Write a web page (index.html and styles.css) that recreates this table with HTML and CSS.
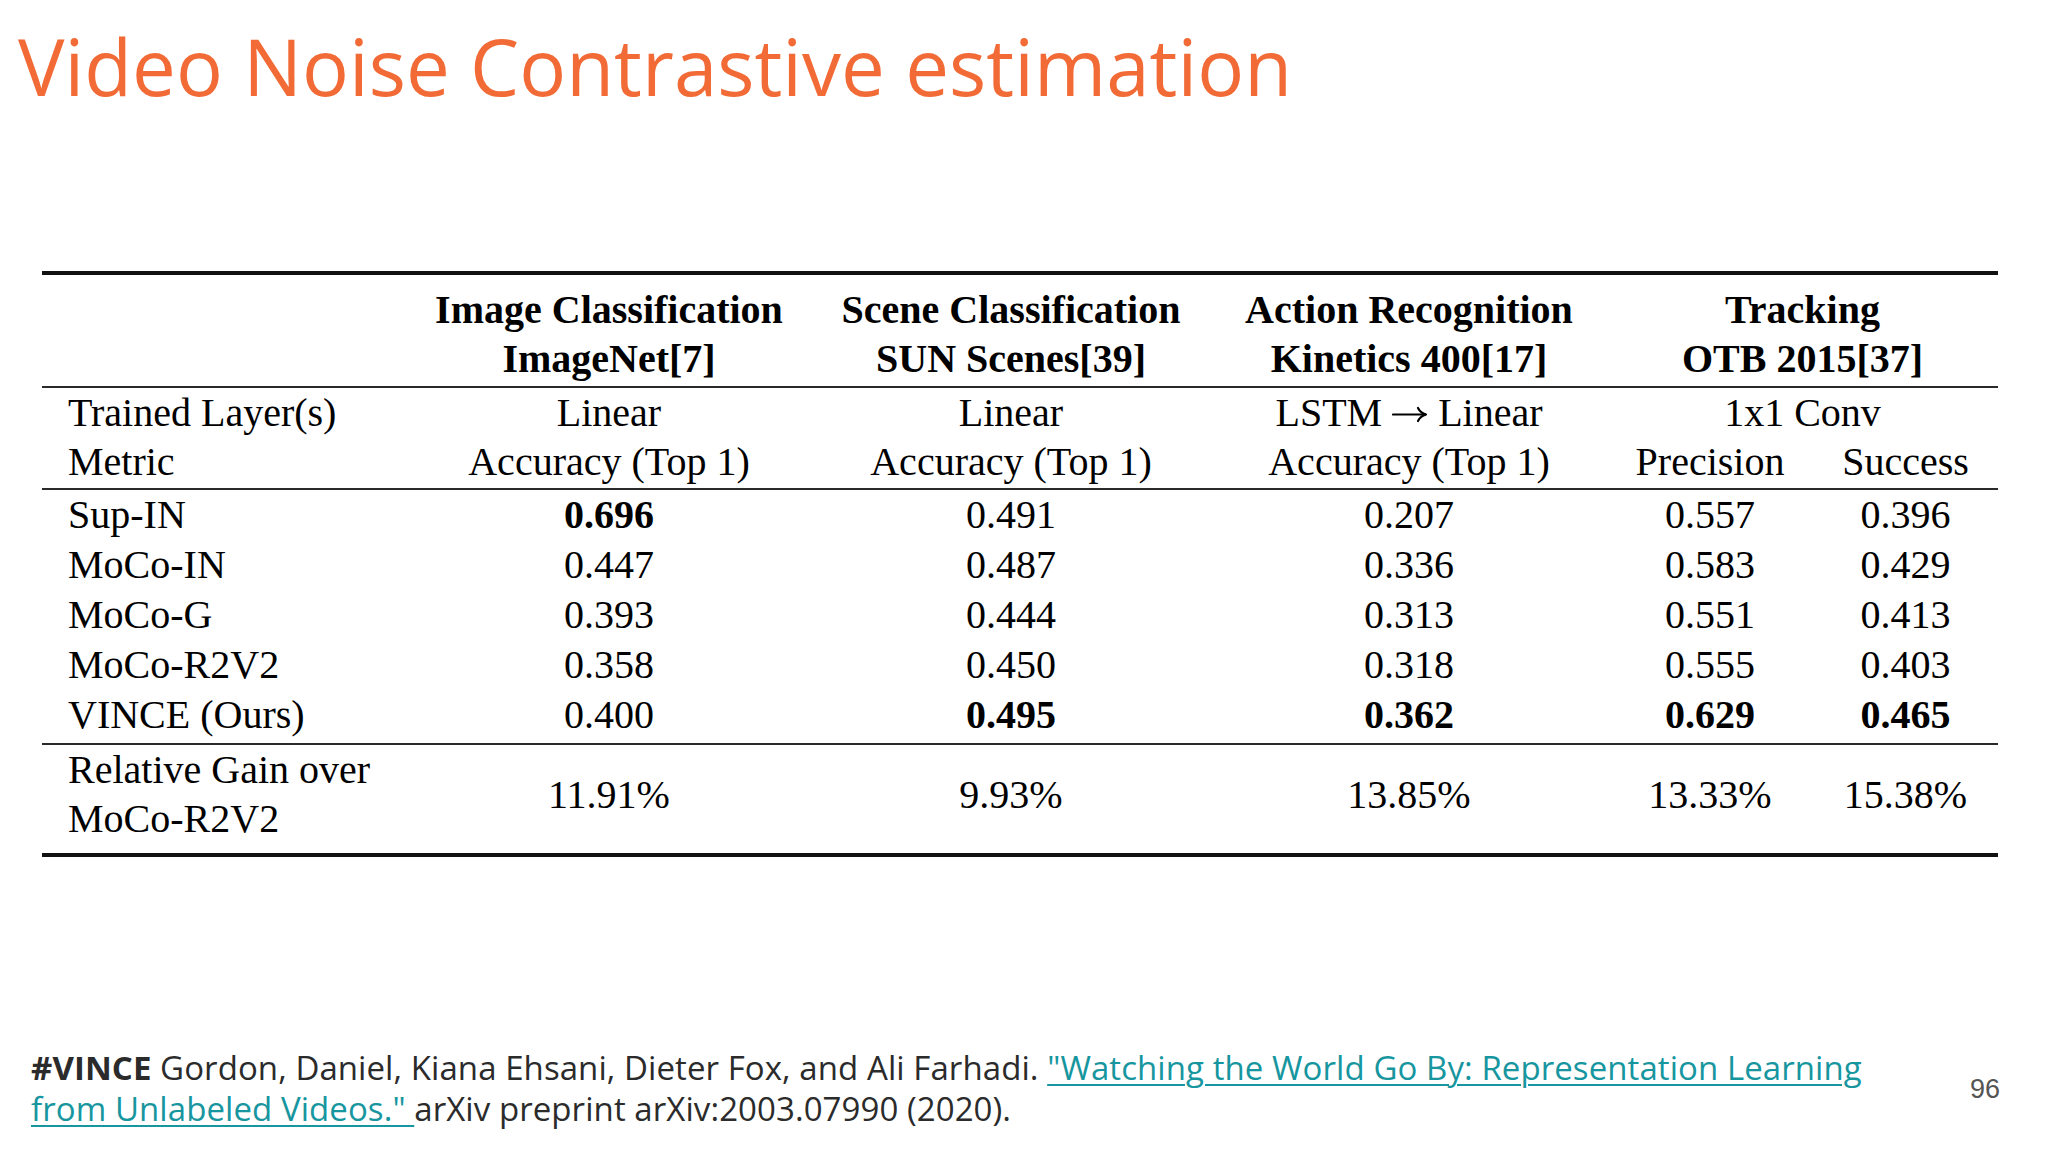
FILE: index.html
```html
<!DOCTYPE html>
<html lang="en">
<head>
<meta charset="utf-8">
<title>Video Noise Contrastive estimation</title>
<link rel="stylesheet" href="styles.css">
</head>
<body>
<div class="slide">
  <h1 class="title">Video Noise Contrastive estimation</h1>

  <table class="results">
    <colgroup>
      <col class="c-label">
      <col class="c-a">
      <col class="c-b">
      <col class="c-c">
      <col class="c-d">
      <col class="c-e">
    </colgroup>
    <thead>
      <tr class="hd1">
        <th></th>
        <th>Image Classification</th>
        <th>Scene Classification</th>
        <th>Action Recognition</th>
        <th colspan="2">Tracking</th>
      </tr>
      <tr class="hd2">
        <th></th>
        <th>ImageNet[7]</th>
        <th>SUN Scenes[39]</th>
        <th>Kinetics 400[17]</th>
        <th colspan="2">OTB 2015[37]</th>
      </tr>
    </thead>
    <tbody class="setup">
      <tr class="first">
        <td class="label">Trained Layer(s)</td>
        <td>Linear</td>
        <td>Linear</td>
        <td>LSTM <svg class="arrow" viewBox="0 0 36 20" width="36" height="20" aria-label="→"><path d="M1 10.5 H33" /><path d="M26 4 Q28.5 9 34 10.5 Q28.5 12 26 17" /></svg> Linear</td>
        <td colspan="2">1x1 Conv</td>
      </tr>
      <tr class="last">
        <td class="label">Metric</td>
        <td>Accuracy (Top 1)</td>
        <td>Accuracy (Top 1)</td>
        <td>Accuracy (Top 1)</td>
        <td>Precision</td>
        <td>Success</td>
      </tr>
    </tbody>
    <tbody class="data">
      <tr class="first">
        <td class="label">Sup-IN</td>
        <td class="best">0.696</td>
        <td>0.491</td>
        <td>0.207</td>
        <td>0.557</td>
        <td>0.396</td>
      </tr>
      <tr>
        <td class="label">MoCo-IN</td>
        <td>0.447</td>
        <td>0.487</td>
        <td>0.336</td>
        <td>0.583</td>
        <td>0.429</td>
      </tr>
      <tr>
        <td class="label">MoCo-G</td>
        <td>0.393</td>
        <td>0.444</td>
        <td>0.313</td>
        <td>0.551</td>
        <td>0.413</td>
      </tr>
      <tr>
        <td class="label">MoCo-R2V2</td>
        <td>0.358</td>
        <td>0.450</td>
        <td>0.318</td>
        <td>0.555</td>
        <td>0.403</td>
      </tr>
      <tr class="last">
        <td class="label">VINCE (Ours)</td>
        <td>0.400</td>
        <td class="best">0.495</td>
        <td class="best">0.362</td>
        <td class="best">0.629</td>
        <td class="best">0.465</td>
      </tr>
    </tbody>
    <tbody class="gain">
      <tr class="first last">
        <td class="label">Relative Gain over<br>MoCo-R2V2</td>
        <td>11.91%</td>
        <td>9.93%</td>
        <td>13.85%</td>
        <td>13.33%</td>
        <td>15.38%</td>
      </tr>
    </tbody>
  </table>

  <footer class="footer">
    <p class="cite"><strong>#VINCE</strong> Gordon, Daniel, Kiana Ehsani, Dieter Fox, and Ali Farhadi. <a class="cite-link" href="#">"Watching the World Go By: Representation Learning<br>from Unlabeled Videos." </a> arXiv preprint arXiv:2003.07990 (2020).</p>
    <span class="page-num">96</span>
  </footer>
</div>
</body>
</html>
```

FILE: styles.css
```css
html, body {
  margin: 0;
  padding: 0;
  background: #ffffff;
}

.slide {
  width: 2048px;
  height: 1152px;
  display: flex;
  flex-direction: column;
  box-sizing: border-box;
  overflow: hidden;
}

.title {
  margin: 16px 0 0 0;
  padding-left: 18px;
  font-family: "Open Sans", "Noto Sans", sans-serif;
  font-weight: 400;
  font-size: 78px;
  line-height: 100px;
  color: #f26a36;
  letter-spacing: 0.05px;
}

/* ---------- table ---------- */
.results {
  margin: 155px 0 0 42px;
  width: 1956px;
  table-layout: fixed;
  border-collapse: separate;
  border-spacing: 0;
  font-family: "Liberation Serif", "Times New Roman", serif;
  font-size: 40px;
  color: #000;
}

.c-label { width: 365px; }
.c-a { width: 404px; }
.c-b { width: 400px; }
.c-c { width: 396px; }
.c-d { width: 206px; }
.c-e { width: 185px; }

.results th,
.results td {
  padding: 0;
  text-align: center;
  white-space: nowrap;
  vertical-align: middle;
}

.results th {
  font-weight: 700;
  line-height: 49px;
}

.hd1 th {
  border-top: 4px solid #111;
  padding-top: 10px;
}

.hd2 th {
  padding-bottom: 3px;
}

.results td.label {
  text-align: left;
  padding-left: 26px;
}

.arrow {
  display: inline-block;
  vertical-align: 2px;
  fill: none;
  stroke: #000;
  stroke-width: 2.2;
  stroke-linecap: round;
  stroke-linejoin: round;
}

.setup td {
  line-height: 49px;
}

.data td {
  line-height: 50px;
}

.gain td {
  line-height: 49px;
}

.setup .first td,
.data .first td,
.gain .first td {
  border-top: 2px solid #2a2a2a;
}

.setup .last td {
  padding-bottom: 2px;
}

.data .last td {
  padding-bottom: 3px;
}

.gain .last td {
  padding-bottom: 10px;
  border-bottom: 4px solid #111;
}

.results td.best {
  font-weight: 700;
}

/* ---------- footer ---------- */
.footer {
  margin-top: auto;
  display: flex;
  align-items: center;
  justify-content: space-between;
  padding: 0 48px 23px 31px;
}

.cite {
  margin: 0;
  font-family: "Open Sans", "Noto Sans", sans-serif;
  font-size: 33px;
  line-height: 41px;
  letter-spacing: 0.07px;
  color: #2b2b2b;
}

.cite strong {
  font-weight: 700;
}

.cite-link {
  color: #1796a0;
  text-decoration: underline;
  text-decoration-thickness: 2px;
  text-underline-offset: 4px;
}

.page-num {
  font-family: "Liberation Sans", Arial, sans-serif;
  font-size: 27px;
  color: #555;
  margin-top: 2px;
}
```
